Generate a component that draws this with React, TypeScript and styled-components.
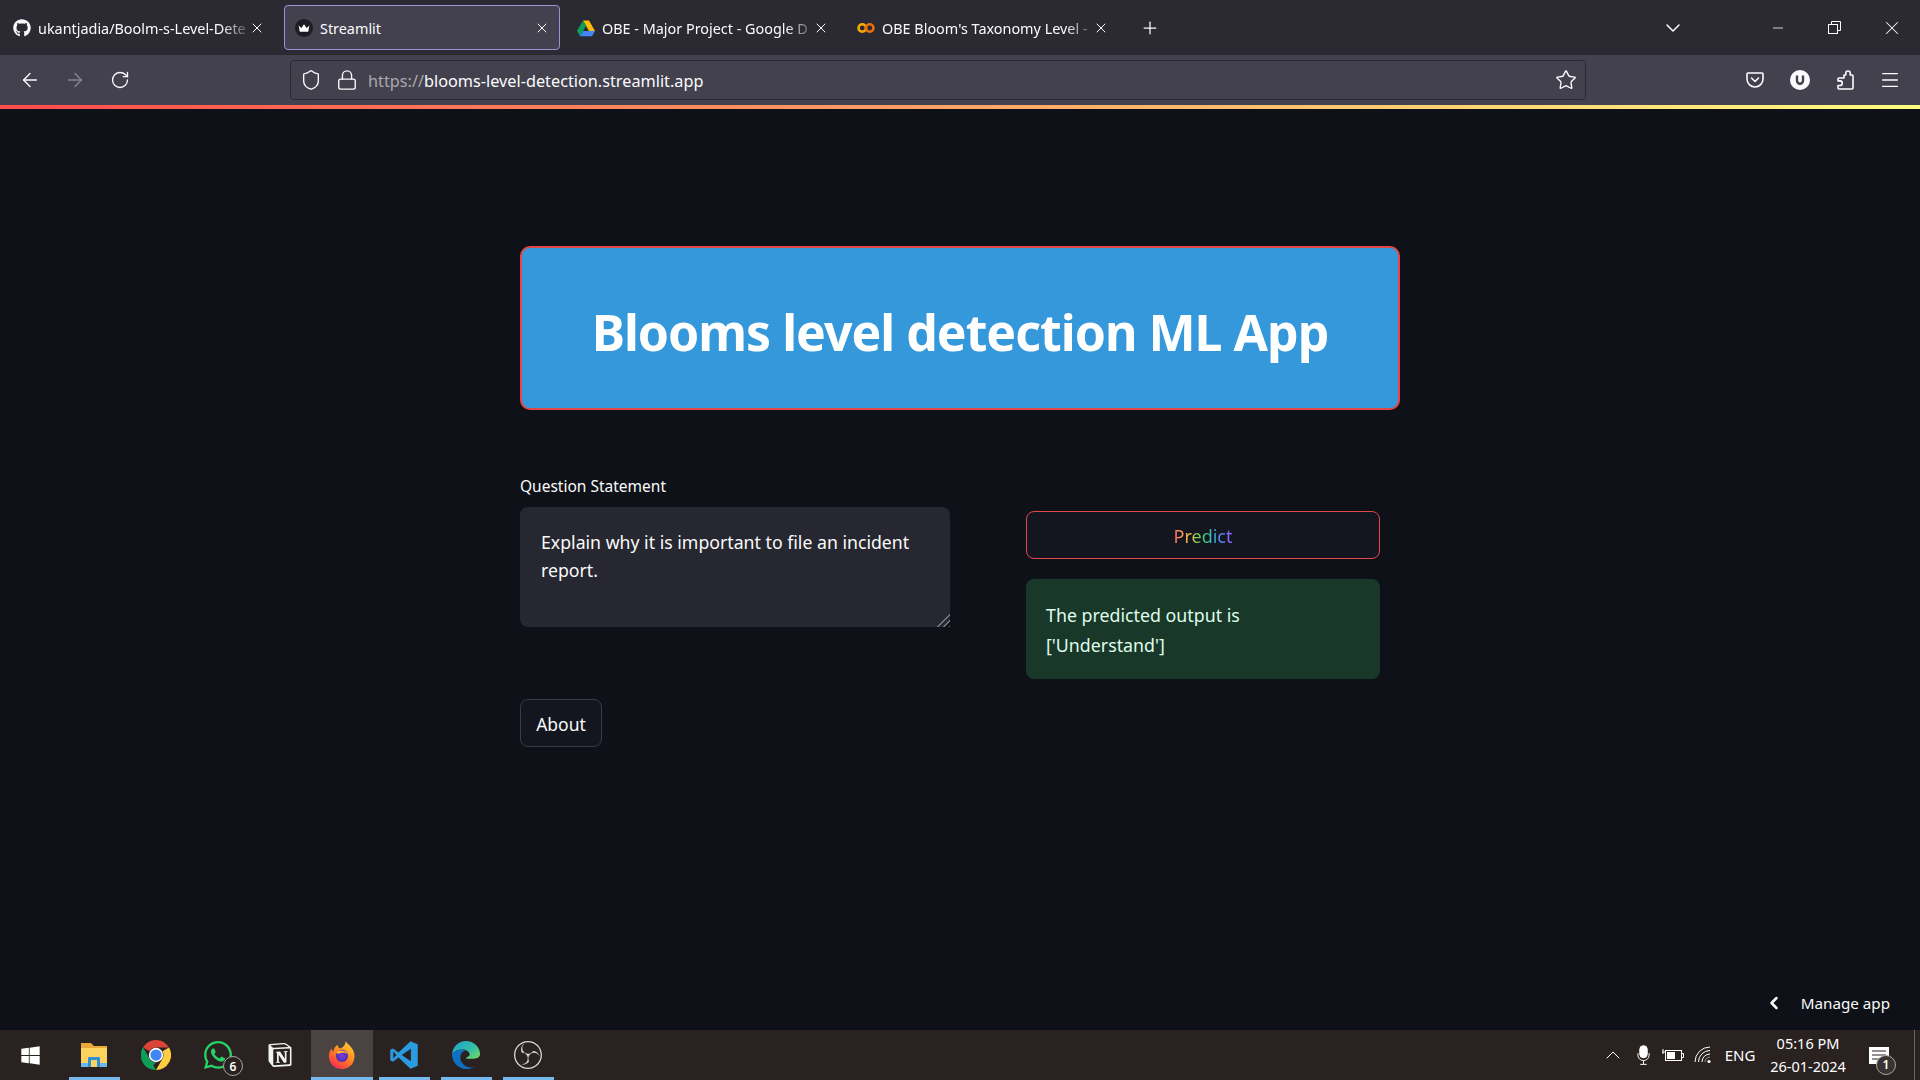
import React from 'react'
import styled, { createGlobalStyle } from 'styled-components'
import { ArrowLeft, ArrowRight, ChevronDown, ChevronLeft, ChevronUp, Lock, Menu, Minus, Plus, RotateCw, Shield, Star, X } from 'lucide-react'
import { FaGithub, FaWhatsapp, FaWindows } from 'react-icons/fa'
import { SiNotion, SiObsstudio } from 'react-icons/si'

const GlobalStyle = createGlobalStyle`
    html, body {
        margin: 0;
        padding: 0;
        background: #0e1117;
    }
    * {
        box-sizing: border-box;
    }
`;

const Page = styled.div`
    position: relative;
    display: flex;
    flex-direction: column;
    width: 1920px;
    height: 1080px;
    overflow: hidden;
    font-family: "Noto Sans", "Open Sans", sans-serif;
    background: #0e1117;
`;

const TabBar = styled.div`
    display: flex;
    align-items: center;
    height: 55px;
    gap: 4px;
    background: #2b2a33;
    color: #fbfbfe;
`;

const Tab = styled.div<{ $active?: boolean }>`
    display: flex;
    align-items: center;
    width: 276px;
    height: 45px;
    padding: 0 ${p => p.$active ? '9px' : '10px'} 0 ${p => p.$active ? '10px' : '12px'};
    gap: 7px;
    border-radius: 4px;
    font-size: 14.4px;
    background: ${p => p.$active ? '#42414d' : 'transparent'};
    border: 1px solid ${p => p.$active ? '#9f8fd6' : 'transparent'};
`;

const FirstTab = styled(Tab)`
    width: 280px;
    padding: 0 14px 0 12px;
`;

const TabIcon = styled.span`
    display: flex;
    flex: none;
    width: 18px;
    height: 18px;
`;

const TabTitle = styled.span<{ $fade?: boolean }>`
    flex: 1;
    min-width: 0;
    padding-top: 2px;
    white-space: nowrap;
    ${p => p.$fade && 'mask-image: linear-gradient(90deg, #000 88%, rgba(0, 0, 0, 0.25));'}
`;

const TabClose = styled(X)`
    flex: none;
    margin-left: -4px;
`;

const NewTab = styled.span`
    display: flex;
    margin-left: 16px;
`;

const WindowControls = styled.div`
    display: flex;
    align-items: center;
    margin-left: auto;
`;

const TabsMenu = styled.span`
    display: flex;
    margin-right: 64px;
`;

const WindowButton = styled.span`
    display: flex;
    justify-content: center;
    width: 57px;
`;

const Toolbar = styled.div`
    display: flex;
    align-items: center;
    height: 50px;
    padding: 0 8px 0 7px;
    background: #42414d;
    color: #fbfbfe;
`;

const ToolButton = styled.span<{ $dim?: boolean }>`
    display: flex;
    justify-content: center;
    width: 45px;
    color: ${p => p.$dim ? '#85848d' : '#fbfbfe'};
`;

const UrlBar = styled.div`
    display: flex;
    align-items: center;
    width: 1296px;
    height: 40px;
    margin-left: 148px;
    padding: 0 8px 0 9px;
    border: 1px solid #2b2a33;
    border-radius: 4px;
    background: #42414d;
`;

const UrlIcon = styled.span`
    display: flex;
    margin-right: 14px;
`;

const UrlText = styled.span`
    flex: 1;
    margin-left: -4px;
    padding-top: 2px;
    font-size: 16.25px;
    color: #fbfbfe;
    span {
        color: #a9a8b0;
    }
`;

const ToolbarEnd = styled.div`
    display: flex;
    align-items: center;
    margin-left: auto;
`;

const Rainbar = styled.div`
    height: 4px;
    background: linear-gradient(90deg, #ff4b4b, #fffd80);
`;

const Main = styled.main`
    flex: 1;
    display: flex;
    flex-direction: column;
    width: 880px;
    margin: 0 auto;
    padding-top: 137px;
    color: #fafafa;
`;

const Hero = styled.div`
    display: flex;
    align-items: center;
    justify-content: center;
    height: 164px;
    padding-top: 7px;
    border: 2px solid #e2474a;
    border-radius: 10px;
    background: #3498db;
`;

const Title = styled.h1`
    margin: 0;
    font-size: 50px;
    font-weight: 700;
    letter-spacing: -1px;
    color: #fff;
`;

const Columns = styled.div`
    display: grid;
    grid-template-columns: 430px 354px;
    column-gap: 76px;
    margin-top: 62px;
`;

const Label = styled.label`
    display: block;
    height: 35px;
    padding-top: 2px;
    font-size: 15.5px;
    line-height: 24px;
`;

const Question = styled.textarea`
    display: block;
    width: 430px;
    height: 120px;
    padding: 21px 21px 11px;
    border: none;
    outline: none;
    border-radius: 8px;
    background: #262730;
    color: #fafafa;
    font-family: inherit;
    font-size: 17.7px;
    line-height: 28px;

    &::-webkit-resizer {
        background:
            linear-gradient(135deg, #262730 50%, transparent 50%),
            repeating-linear-gradient(135deg, #77777d 0 1px, transparent 1px 4px);
    }
`;

const RightColumn = styled.div`
    display: flex;
    flex-direction: column;
    gap: 20px;
    padding-top: 39px;
`;

const PredictButton = styled.button`
    height: 48px;
    padding-top: 3px;
    border: 1px solid #e2474a;
    border-radius: 8px;
    background: #13161e;
    font-family: inherit;
    font-size: 18px;
`;

const RainbowText = styled.span`
    background: linear-gradient(90deg, #ff6c6c, #ffbd45, #3dd56d, #3d9df3, #9a5dff);
    -webkit-background-clip: text;
    background-clip: text;
    color: transparent;
`;

const SuccessBox = styled.div`
    height: 100px;
    padding: 21px 20px 19px;
    border-radius: 8px;
    background: #193829;
    color: #dffde9;
    font-size: 17.8px;
    line-height: 30px;
`;

const AboutButton = styled.button`
    align-self: flex-start;
    width: 82px;
    height: 48px;
    margin-top: 20px;
    padding-top: 3px;
    border: 1px solid #3a3c44;
    border-radius: 8px;
    background: #13161e;
    color: #fafafa;
    font-family: inherit;
    font-size: 17.5px;
`;

const ManageApp = styled.div`
    position: absolute;
    right: 30px;
    bottom: 67px;
    display: flex;
    align-items: center;
    gap: 17px;
    font-size: 15.2px;
    color: #fafafa;
`;

const Taskbar = styled.div`
    display: flex;
    align-items: stretch;
    height: 50px;
    background: #2a2220;
    color: #fff;
`;

const TaskTile = styled.div<{ $open?: boolean; $active?: boolean; $start?: boolean }>`
    position: relative;
    display: flex;
    align-items: center;
    justify-content: center;
    width: ${p => p.$start ? '63px' : '62px'};
    padding-right: ${p => p.$start ? '3px' : '0'};
    background: ${p => p.$active ? '#4a4341' : 'transparent'};
    ${p => p.$open && `
        &::after {
            content: '';
            position: absolute;
            left: ${p.$active ? '0' : '6px'};
            right: ${p.$active ? '0' : '5px'};
            bottom: 0;
            height: 3px;
            background: #76b9ed;
        }
    `}
`;

const Badge = styled.span`
    position: absolute;
    right: 6px;
    bottom: 4px;
    display: flex;
    align-items: center;
    justify-content: center;
    width: 20px;
    height: 20px;
    border: 1px solid #a9a5a3;
    border-radius: 50%;
    background: #2a2220;
    color: #fff;
    font-size: 12px;
    font-weight: 600;
`;

const NotificationBadge = styled(Badge)`
    right: 8px;
    bottom: -11px;
    background: #3a3331;
`;

const Tray = styled.div`
    display: flex;
    align-items: center;
    margin-left: auto;
    font-size: 15px;
`;

const TrayItem = styled.span<{ $width: number }>`
    position: relative;
    display: flex;
    align-items: center;
    justify-content: center;
    width: ${p => p.$width}px;
`;

const Clock = styled.div`
    width: 92px;
    text-align: center;
    font-size: 14.5px;
    line-height: 23px;
`;

const ShowDesktop = styled.span`
    width: 6px;
    height: 100%;
    margin-left: 10px;
    border-left: 1px solid #6a6462;
`;

const DriveIcon = () => (
    <svg viewBox="0 0 24 22" width="18" height="18">
        <path d="M8 1h8l8 14h-8z" fill="#fbbc04" />
        <path d="M8 1 0 15l4 7 8-14z" fill="#0f9d58" />
        <path d="M8 15h16l-4 7H4z" fill="#4285f4" />
    </svg>
)

const ColabIcon = () => (
    <svg viewBox="0 0 24 14" width="20" height="18">
        <circle cx="7" cy="7" r="5" fill="none" stroke="#f9ab00" strokeWidth="3.4" />
        <circle cx="17" cy="7" r="5" fill="none" stroke="#e8710a" strokeWidth="3.4" />
    </svg>
)

const StreamlitIcon = () => (
    <svg viewBox="0 0 18 18" width="18" height="18">
        <circle cx="9" cy="9" r="9" fill="#1d1c22" />
        <path d="M3.6 6.5 6.4 9 9 5.2 11.6 9l2.8-2.5-1.2 6.2H4.8z" fill="#fff" />
    </svg>
)

const ExplorerIcon = () => (
    <svg viewBox="0 0 28 26" width="28" height="26">
        <path d="M1 1h10l3 3h13v6H1z" fill="#e8a93a" />
        <path d="M1 6h26v19H1z" fill="#fcd35f" />
        <path d="M8 25v-9a1 1 0 0 1 1-1h10a1 1 0 0 1 1 1v9h-3v-7h-6v7z" fill="#2f8fd8" />
        <path d="M1 21h7v4H1zM20 21h7v4h-7z" fill="#6cb7ee" />
    </svg>
)

const ChromeIcon = () => (
    <svg viewBox="0 0 48 48" width="30" height="30">
        <path d="M24 0a24 24 0 0 1 20.8 12H24a12 12 0 0 0-10.4 6L3.2 12A24 24 0 0 1 24 0z" fill="#db4437" />
        <path d="M3.2 12 13.6 30a12 12 0 0 0 10.4 6L13.6 46A24 24 0 0 1 3.2 12z" fill="#0f9d58" />
        <path d="M44.8 12A24 24 0 0 1 24 48l10.4-18a12 12 0 0 0 0-12z" fill="#ffcd40" />
        <path d="M3.2 12 13.6 30 24 48A24 24 0 0 1 3.2 12z" fill="#0f9d58" />
        <circle cx="24" cy="24" r="11.5" fill="#fff" />
        <circle cx="24" cy="24" r="9" fill="#4285f4" />
    </svg>
)

const FirefoxIcon = () => (
    <svg viewBox="0 0 32 32" width="30" height="30">
        <defs>
            <linearGradient id="foxBody" x1="0.8" y1="0" x2="0.2" y2="1">
                <stop offset="0" stopColor="#ffd43b" />
                <stop offset="0.45" stopColor="#ff8a1f" />
                <stop offset="1" stopColor="#f5264f" />
            </linearGradient>
            <radialGradient id="foxCore" cx="0.5" cy="0.5" r="0.5">
                <stop offset="0" stopColor="#7b3fe0" />
                <stop offset="1" stopColor="#4d2bb0" />
            </radialGradient>
        </defs>
        <path d="M20 1c1 3 4 4 6 7 3 4 4 8 3 12-1 7-7 11-13 11C8 31 2 25 2 17c0-3 1-6 3-8 0 2 1 3 2 3 0-3 2-6 5-7-1 2 0 3 2 4 3-1 6-4 6-8z" fill="url(#foxBody)" />
        <circle cx="16" cy="17" r="6.5" fill="url(#foxCore)" />
        <path d="M10 13c4-3 10-2 12 2-3-2-7-2-10 0z" fill="#ffb52e" />
    </svg>
)

const VsCodeIcon = () => (
    <svg viewBox="0 0 24 24" width="30" height="30">
        <path d="M17.2 1 7.6 10 3.2 6.7 1 7.8v8.4l2.2 1.1 4.4-3.3 9.6 9 5.8-2.4V3.4z" fill="#2a9bdf" />
        <path d="M17.5 7 10.2 12l7.3 5z" fill="#2a2220" />
        <path d="M3.4 9.2 6 12l-2.6 2.8z" fill="#2a2220" />
    </svg>
)

const EdgeIcon = () => (
    <svg viewBox="0 0 32 32" width="30" height="30">
        <defs>
            <linearGradient id="edgeTop" x1="0" y1="0" x2="1" y2="1">
                <stop offset="0" stopColor="#1ea1d8" />
                <stop offset="0.6" stopColor="#35c1a1" />
                <stop offset="1" stopColor="#7ed957" />
            </linearGradient>
        </defs>
        <path d="M1 15C2 7 8 1 16 1c8 0 15 6 15 14 0 3-3 5-7 5h-8c0-2 3-2 4-4 0-4-4-6-8-6-5 0-9 2-11 5z" fill="url(#edgeTop)" />
        <path d="M1 15c2-3 6-5 11-5 1 0 3 0 4 1-4 1-6 4-6 8 0 5 4 9 9 10 3 1 6 0 8-1-3 2-7 3-11 3C8 31 1 24 1 15z" fill="#0f6fc0" />
    </svg>
)

const PocketIcon = () => (
    <svg viewBox="0 0 20 20" width="20" height="20" fill="none" stroke="#fbfbfe" strokeWidth="1.6" strokeLinecap="round" strokeLinejoin="round">
        <path d="M3 3h14a1 1 0 0 1 1 1v5a8 8 0 0 1-16 0V4a1 1 0 0 1 1-1z" />
        <path d="m6.5 8 3.5 3.5L13.5 8" />
    </svg>
)

const UblockIcon = () => (
    <svg viewBox="0 0 20 20" width="20" height="20">
        <circle cx="10" cy="10" r="10" fill="#fbfbfe" />
        <path d="M7 5.5v5.3a3 3 0 0 0 6 0V5.5" fill="none" stroke="#42414d" strokeWidth="2.4" />
    </svg>
)

const ExtensionIcon = () => (
    <svg viewBox="0 0 20 20" width="20" height="20" fill="none" stroke="#fbfbfe" strokeWidth="1.6" strokeLinejoin="round">
        <path d="M9 5h1.8V3.2a2.2 2.2 0 0 1 4.4 0V5H17a1 1 0 0 1 1 1v12a1 1 0 0 1-1 1H4a1 1 0 0 1-1-1v-2.5h2a2.3 2.3 0 0 0 0-4.6H3V9a1 1 0 0 1 1-1h5z" />
    </svg>
)

const RestoreIcon = () => (
    <svg viewBox="0 0 13 13" width="13" height="13" fill="none" stroke="#fbfbfe" strokeWidth="1">
        <rect x="0.5" y="3.5" width="9" height="9" />
        <path d="M3.5 3.5v-3h9v9h-3" />
    </svg>
)

const BatteryIcon = () => (
    <svg viewBox="0 0 22 14" width="22" height="14" fill="none" stroke="#fff" strokeWidth="1">
        <rect x="3.5" y="2.5" width="16" height="10" />
        <rect x="5" y="4" width="8" height="7" fill="#fff" stroke="none" />
        <path d="M20 5.5h1.5v4H20M0 4h3M1 1v5" />
    </svg>
)

const WifiIcon = () => (
    <svg viewBox="0 0 18 18" width="18" height="18" fill="none" stroke="#fff" strokeWidth="1">
        <path d="M1 16A15 15 0 0 1 16 1" />
        <path d="M4.5 16A11.5 11.5 0 0 1 16 4.5" />
        <path d="M8 16a8 8 0 0 1 8-8" />
        <path d="M11 16a5 5 0 0 1 5-5" opacity="0.5" />
        <circle cx="15" cy="15.5" r="1.6" fill="#fff" stroke="none" />
    </svg>
)

const MicIcon = () => (
    <svg viewBox="0 0 16 22" width="15" height="22" fill="none" stroke="#fff" strokeWidth="1">
        <rect x="4" y="1" width="8" height="13" rx="4" fill="#fff" />
        <path d="M2 9v2a6 6 0 0 0 12 0V9M8 17v4M4.5 21h7" />
    </svg>
)

const NotificationIcon = () => (
    <svg viewBox="0 0 20 17" width="20" height="17">
        <path d="M0 0h20v17H0z" fill="#fff" />
        <path d="M3 4h14M3 8h14M3 12h8" stroke="#2a2220" strokeWidth="1" />
    </svg>
)

const App: React.FC = () => {
    return (
        <Page>
            <GlobalStyle />
            <TabBar>
                <FirstTab>
                    <TabIcon><FaGithub size={18} color="#fbfbfe" /></TabIcon>
                    <TabTitle $fade>ukantjadia/Boolm-s-Level-Dete</TabTitle>
                    <TabClose size={16} strokeWidth={1.5} />
                </FirstTab>
                <Tab $active>
                    <TabIcon><StreamlitIcon /></TabIcon>
                    <TabTitle>Streamlit</TabTitle>
                    <TabClose size={16} strokeWidth={1.5} />
                </Tab>
                <Tab>
                    <TabIcon><DriveIcon /></TabIcon>
                    <TabTitle $fade>OBE - Major Project - Google D</TabTitle>
                    <TabClose size={16} strokeWidth={1.5} />
                </Tab>
                <Tab>
                    <TabIcon><ColabIcon /></TabIcon>
                    <TabTitle $fade>OBE Bloom's Taxonomy Level -</TabTitle>
                    <TabClose size={16} strokeWidth={1.5} />
                </Tab>
                <NewTab><Plus size={20} strokeWidth={1.5} /></NewTab>
                <WindowControls>
                    <TabsMenu><ChevronDown size={24} strokeWidth={1.5} /></TabsMenu>
                    <WindowButton><Minus size={16} strokeWidth={1.2} /></WindowButton>
                    <WindowButton><RestoreIcon /></WindowButton>
                    <WindowButton><X size={22} strokeWidth={1.1} /></WindowButton>
                </WindowControls>
            </TabBar>
            <Toolbar>
                <ToolButton><ArrowLeft size={22} strokeWidth={1.5} /></ToolButton>
                <ToolButton $dim><ArrowRight size={22} strokeWidth={1.5} /></ToolButton>
                <ToolButton><RotateCw size={20} strokeWidth={1.6} /></ToolButton>
                <UrlBar>
                    <UrlIcon><Shield size={22} strokeWidth={1.5} color="#fbfbfe" /></UrlIcon>
                    <UrlIcon><Lock size={22} strokeWidth={1.5} color="#fbfbfe" /></UrlIcon>
                    <UrlText><span>https://</span>blooms-level-detection.streamlit.app</UrlText>
                    <Star size={22} strokeWidth={1.5} color="#fbfbfe" />
                </UrlBar>
                <ToolbarEnd>
                    <ToolButton><PocketIcon /></ToolButton>
                    <ToolButton><UblockIcon /></ToolButton>
                    <ToolButton><ExtensionIcon /></ToolButton>
                    <ToolButton><Menu size={22} strokeWidth={1.5} /></ToolButton>
                </ToolbarEnd>
            </Toolbar>
            <Rainbar />
            <Main>
                <Hero>
                    <Title>Blooms level detection ML App</Title>
                </Hero>
                <Columns>
                    <div>
                        <Label>Question Statement</Label>
                        <Question defaultValue="Explain why it is important to file an incident report." />
                    </div>
                    <RightColumn>
                        <PredictButton><RainbowText>Predict</RainbowText></PredictButton>
                        <SuccessBox>The predicted output is<br />['Understand']</SuccessBox>
                    </RightColumn>
                </Columns>
                <AboutButton>About</AboutButton>
            </Main>
            <ManageApp>
                <ChevronLeft size={20} strokeWidth={3} />
                Manage app
            </ManageApp>
            <Taskbar>
                <TaskTile $start><FaWindows size={21} /></TaskTile>
                <TaskTile $open><ExplorerIcon /></TaskTile>
                <TaskTile><ChromeIcon /></TaskTile>
                <TaskTile>
                    <FaWhatsapp size={32} color="#25d366" />
                    <Badge>6</Badge>
                </TaskTile>
                <TaskTile><SiNotion size={24} color="#f2f2f2" /></TaskTile>
                <TaskTile $open $active><FirefoxIcon /></TaskTile>
                <TaskTile $open><VsCodeIcon /></TaskTile>
                <TaskTile $open><EdgeIcon /></TaskTile>
                <TaskTile $open><SiObsstudio size={28} color="#d8d8d8" /></TaskTile>
                <Tray>
                    <TrayItem $width={30}><ChevronUp size={24} strokeWidth={1} /></TrayItem>
                    <TrayItem $width={30}><MicIcon /></TrayItem>
                    <TrayItem $width={30}><BatteryIcon /></TrayItem>
                    <TrayItem $width={30}><WifiIcon /></TrayItem>
                    <TrayItem $width={44}>ENG</TrayItem>
                    <Clock>05:16 PM<br />26-01-2024</Clock>
                    <TrayItem $width={50}>
                        <NotificationIcon />
                        <NotificationBadge>1</NotificationBadge>
                    </TrayItem>
                    <ShowDesktop />
                </Tray>
            </Taskbar>
        </Page>
    )
}
export default App
